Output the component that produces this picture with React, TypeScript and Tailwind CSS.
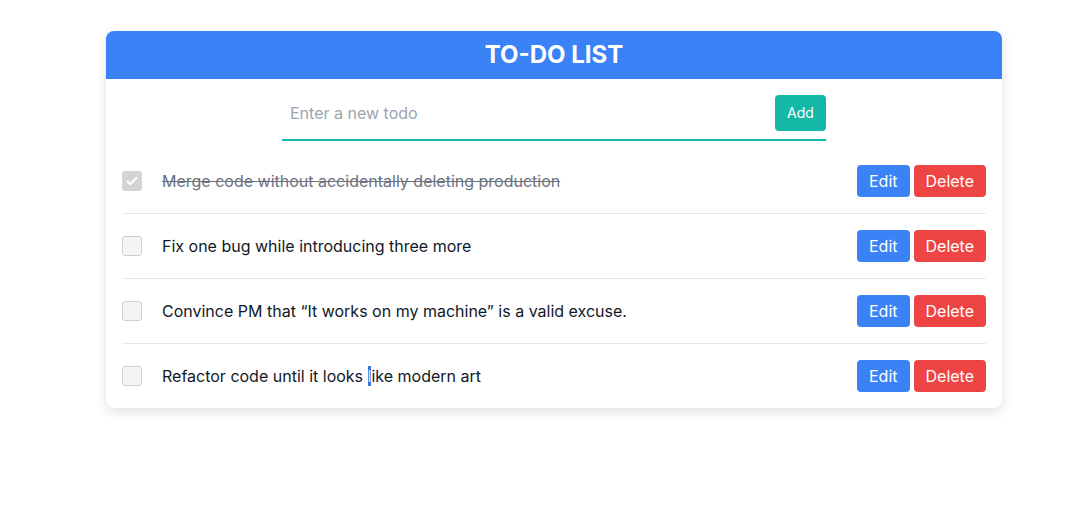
import type { ReactNode } from 'react'

interface Todo {
  id: number
  text: ReactNode
  done: boolean
}

const todos: Todo[] = [
  { id: 1, text: 'Merge code without accidentally deleting production', done: true },
  { id: 2, text: 'Fix one bug while introducing three more', done: false },
  { id: 3, text: 'Convince PM that \u201cIt works on my machine\u201d is a valid excuse.', done: false },
  {
    id: 4,
    text: (
      <>
        Refactor code until it looks <span className="bg-[#3b73db] text-[#dbe4f5]">l</span>ike modern art
      </>
    ),
    done: false,
  },
]

function Checkbox({ checked }: { checked: boolean }) {
  if (checked) {
    return (
      <div className="w-5 h-5 rounded-[3px] bg-[#d4d4d4] flex items-center justify-center flex-shrink-0">
        <svg viewBox="0 0 16 16" className="w-[14px] h-[14px]" fill="none" stroke="#ffffff" strokeWidth="2.4" strokeLinecap="round" strokeLinejoin="round">
          <path d="M3 8.5l3.2 3.2L13 4.5" />
        </svg>
      </div>
    )
  }
  return <div className="w-5 h-5 rounded-[3px] border border-[#cfcfcf] bg-[#f5f5f5] flex-shrink-0" />
}

export default function App() {
  return (
    <div className="min-h-screen bg-white font-['Inter','Noto_Sans',sans-serif]">
      <div className="pt-[31px] pl-[106px]">
        <div className="w-[896px] rounded-lg bg-white shadow-[0_4px_12px_rgba(0,0,0,0.12)] overflow-hidden">
          <div className="h-12 bg-[#3b82f6] flex items-center justify-center">
            <h1 className="text-2xl font-bold text-white">TO-DO LIST</h1>
          </div>

          <div className="px-4 pt-4">
            <div className="w-[544px] mx-auto flex items-center border-b-2 border-[#14b8a6] pb-2">
              <input
                placeholder="Enter a new todo"
                className="flex-1 h-9 px-2 text-base outline-none placeholder:text-[#9ca3af]"
              />
              <button className="w-[51px] h-9 rounded bg-[#14b8a6] text-white text-sm">Add</button>
            </div>

            <ul className="mt-2">
              {todos.map((todo, i) => (
                <li
                  key={todo.id}
                  className={`flex items-center py-4 ${i < todos.length - 1 ? 'border-b border-[#e5e7eb]' : ''}`}
                >
                  <Checkbox checked={todo.done} />
                  <span
                    className={`ml-5 flex-1 text-base ${todo.done ? 'line-through text-[#6b7280]' : 'text-[#111827]'}`}
                  >
                    {todo.text}
                  </span>
                  <div className="flex gap-1">
                    <button className="h-8 px-3 rounded bg-[#3b82f6] text-white text-base">Edit</button>
                    <button className="h-8 px-3 rounded bg-[#ef4444] text-white text-base">Delete</button>
                  </div>
                </li>
              ))}
            </ul>
          </div>
        </div>
      </div>
    </div>
  )
}
